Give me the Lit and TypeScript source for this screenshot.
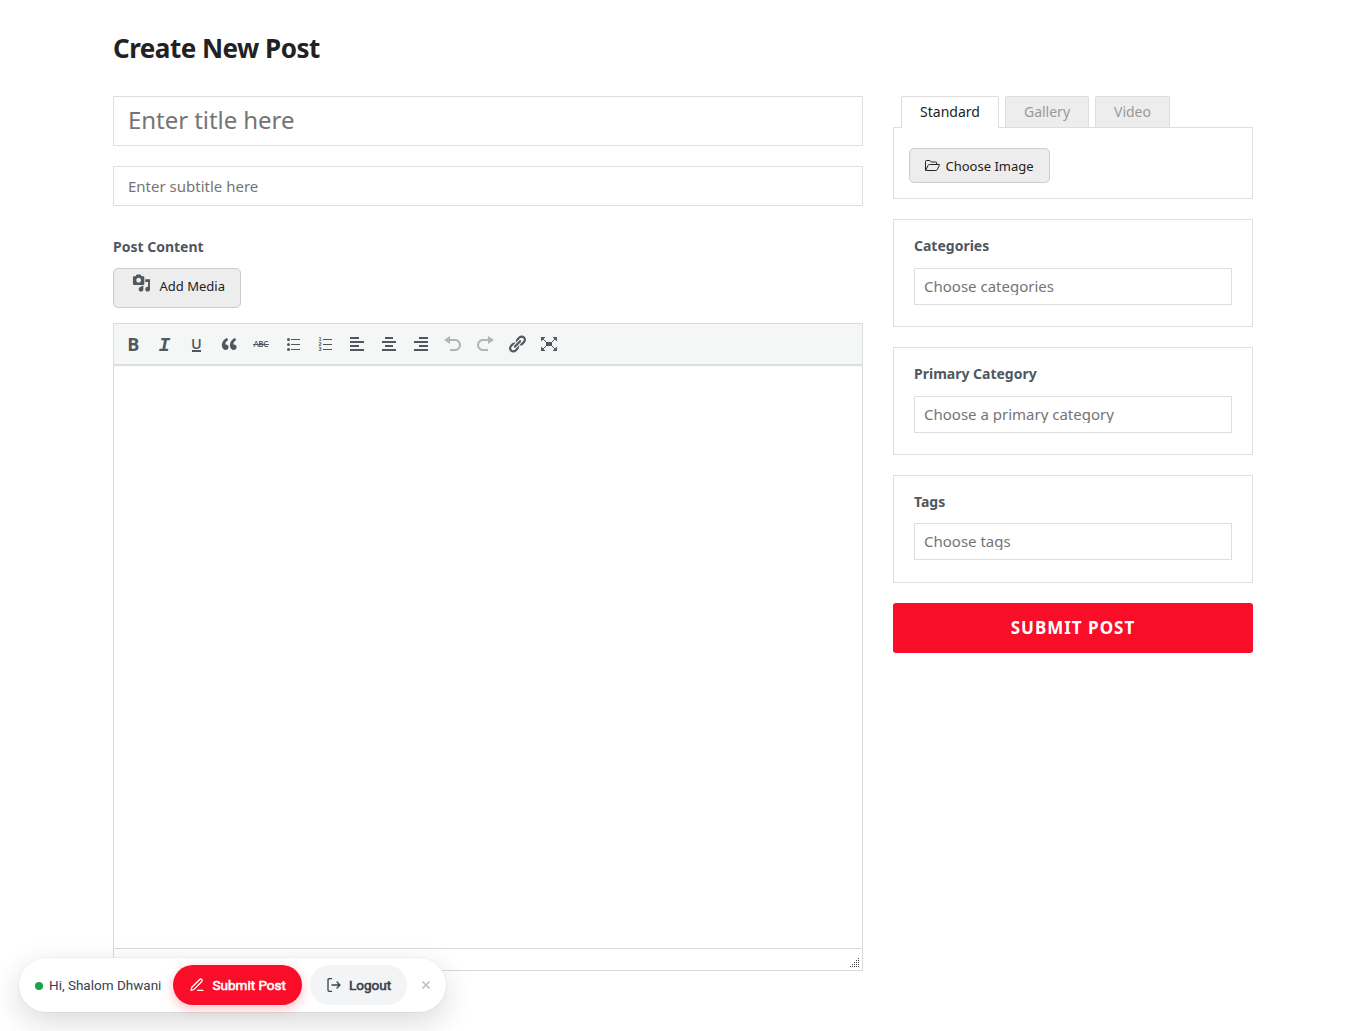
import { LitElement, html, svg, css } from "lit";
import { customElement, state } from "lit/decorators.js";

const icon = (body: unknown, cls = "icon") =>
  html`<svg class=${cls} viewBox="0 0 20 20" width="20" height="20" aria-hidden="true">${body}</svg>`;

const bars = (rows: [number, number][]) =>
  svg`${rows.map(([x, w], i) => svg`<rect x=${x} y=${3 + i * 4} width=${w} height="2" />`)}`;

const TOOLS: { name: string; off?: boolean; body: unknown }[] = [
  { name: "Bold", body: svg`<text class="t-bold" x="4.3" y="17">B</text>` },
  { name: "Italic", body: svg`<text class="t-italic" x="3.600" y="17">I</text>` },
  { name: "Underline", body: svg`<text class="t-under" x="3.9" y="15">U</text><rect x="5" y="16" width="9" height="2" />` },
  {
    name: "Blockquote",
    body: svg`<path d="M9.49 13.22c0-.74-.2-1.38-.61-1.9-.62-.78-1.83-.88-2.53-.72-.29-1.65 1.11-3.75 2.92-4.65L7.88 4c-2.73 1.3-5.42 4.28-4.96 8.05C3.21 14.43 4.59 16 6.54 16c.85 0 1.56-.25 2.12-.75s.83-1.18.83-2.03zm8.05 0c0-.74-.2-1.38-.61-1.9-.63-.78-1.83-.88-2.53-.72-.29-1.65 1.11-3.75 2.92-4.65L15.93 4c-2.73 1.3-5.41 4.28-4.95 8.05.29 2.38 1.66 3.95 3.61 3.95.85 0 1.56-.25 2.12-.75s.83-1.18.83-2.03z"/>`,
  },
  { name: "Strikethrough", body: svg`<text class="t-abc" x="2.4" y="13" textLength="15">ABC</text><rect x="2" y="10" width="16" height="1" />` },
  {
    name: "Bulleted list",
    body: svg`<circle cx="5.5" cy="5.5" r="1.5"/><circle cx="5.5" cy="10.5" r="1.5"/><circle cx="5.5" cy="15.5" r="1.5"/><path d="M8 5h9v1H8zM8 10h9v1H8zM8 15h9v1H8z"/>`,
  },
  {
    name: "Numbered list",
    body: svg`<text class="t-num" x="3.6" y="7">1</text><text class="t-num" x="3.6" y="12.200">2</text><text class="t-num" x="3.6" y="17.400">3</text><path d="M8 5h9v1H8zM8 10h9v1H8zM8 15h9v1H8z"/>`,
  },
  { name: "Align left", body: bars([[3, 9], [3, 14], [3, 9], [3, 14]]) },
  { name: "Align center", body: bars([[6, 8], [3, 14], [6, 8], [3, 14]]) },
  { name: "Align right", body: bars([[8, 9], [3, 14], [8, 9], [3, 14]]) },
  { name: "Undo", off: true, body: svg`<path d="M12 5H7V2L1 6l6 4V7h5c2.2 0 4 1.8 4 4s-1.8 4-4 4H7v2h5c3.3 0 6-2.7 6-6s-2.7-6-6-6z"/>` },
  { name: "Redo", off: true, body: svg`<path d="M8 5h5V2l6 4-6 4V7H8c-2.2 0-4 1.8-4 4s1.8 4 4 4h5v2H8c-3.3 0-6-2.7-6-6s2.7-6 6-6z"/>` },
  {
    name: "Link",
    body: svg`<path d="M17.74 2.76c1.68 1.69 1.68 4.41 0 6.1l-1.53 1.52c-1.12 1.12-2.7 1.47-4.14 1.09l2.62-2.61.76-.77.76-.76c.84-.84.84-2.2 0-3.04-.84-.85-2.2-.85-3.04 0l-.77.76-3.38 3.38c-.37-1.44-.02-3.02 1.1-4.14l1.52-1.53c1.69-1.68 4.42-1.68 6.1 0zM8.59 13.43l5.34-5.34c.42-.42.42-1.1 0-1.52-.44-.43-1.13-.39-1.53 0l-5.33 5.34c-.42.42-.42 1.1 0 1.52.44.43 1.13.39 1.52 0zm-.76 2.29l4.14-4.15c.38 1.44.03 3.02-1.09 4.14l-1.52 1.53c-1.69 1.68-4.41 1.68-6.1 0-1.68-1.68-1.68-4.42 0-6.1l1.53-1.52c1.12-1.12 2.7-1.47 4.14-1.1l-4.14 4.15c-.85.84-.85 2.2 0 3.05.84.84 2.2.84 3.04 0z"/>`,
  },
  {
    name: "Fullscreen",
    body: svg`<path d="M7 8h6v4H7z"/><path d="M2 3h4.500L2 7.500zM18 3v4.500L13.500 3zM2 17v-4.500L6.500 17zM18 17h-4.500l4.500-4.500z"/><path class="line" d="M3.500 4.500 7.200 8.100M16.500 4.500 12.800 8.100M3.500 15.500 7.200 11.900M16.500 15.500 12.800 11.900"/>`,
  },
];

const FIELDS = [
  { label: "Categories", hint: "Choose categories", cls: "card" },
  { label: "Primary Category", hint: "Choose a primary category", cls: "card" },
  { label: "Tags", hint: "Choose tags", cls: "card tight" },
];

@customElement("app-root")
export class AppRoot extends LitElement {
  @state() private tab = "Standard";

  static styles = css`
    :host {
      display: block;
      position: relative;
      height: 1031px;
      overflow: hidden;
      background: #fff;
      color: #222;
      font-family: "Noto Sans", sans-serif;
      font-size: 14px;
    }
    * { box-sizing: border-box; }
    button, input, textarea { font-family: inherit; margin: 0; }
    svg { display: block; flex: none; }
    .page { width: 1140px; margin: 0 auto; padding-top: 30px; }
    h1 {
      margin: 0 0 30px;
      font-size: 26px;
      line-height: 36px;
      font-weight: 700;
      letter-spacing: -0.5px;
      color: #222;
    }
    .columns { display: grid; grid-template-columns: 750px 360px; gap: 30px; }
    .main { display: flex; flex-direction: column; align-items: flex-start; }
    input {
      display: block;
      width: 100%;
      border: 1px solid #dedede;
      border-radius: 0;
      background: #fff;
      outline: none;
      color: #222;
    }
    input::placeholder { color: #757575; opacity: 1; }
    .title { height: 50px; padding: 0 14px 3px; font-size: 24px; letter-spacing: -0.06px; margin-bottom: 20px; }
    .subtitle { height: 40px; padding: 0 14px; font-size: 15px; margin-bottom: 31px; }
    .label { font-size: 14px; line-height: 20px; font-weight: 700; color: #50575e; }
    .media {
      display: flex;
      width: 128px;
      height: 40px;
      margin: 11px 0 15px;
      padding: 5px 0 0 18px;
      gap: 8px;
      border: 1px solid #ccc;
      border-radius: 5px;
      background: #ededed;
      font-size: 13px;
      line-height: 25px;
      color: #222;
    }
    .media svg { width: 18px; height: 18px; margin: 0 1px 0 0; fill: #50575e; }
    .media span { margin-left: 0.5px; }
    .editor {
      display: flex;
      flex-direction: column;
      width: 750px;
      height: 648px;
      border: 1px solid #dadcdc;
    }
    .tools {
      display: flex;
      gap: 12px;
      height: 40px;
      padding: 10px 9px;
      background: #f5f7f7;
      box-shadow: 0 1px 0 #dcdede, 0 2px 1px #dedede;
      position: relative;
    }
    .tool { width: 20px; height: 20px; padding: 0; border: 0; background: none; color: #50575e; }
    .tool.off { color: #b3b5b8; }
    .icon { fill: currentColor; overflow: visible; }
    .line { stroke: currentColor; stroke-width: 1; fill: none; }
    .t-bold { font: 700 18px "Open Sans", sans-serif; }
    .t-italic { font: italic 700 19.500px "Liberation Mono", monospace; }
    .t-under { font: 600 14.500px "Open Sans", sans-serif; }
    .t-abc { font: 600 8px "Open Sans", sans-serif; }
    .t-num { font: 700 5.500px "Liberation Sans", sans-serif; }
    .body { flex: 1; width: 100%; border: 0; outline: none; resize: none; background: #fff; }
    .status { display: flex; justify-content: flex-end; align-items: flex-end; height: 22px; border-top: 1px solid #dadcdc; padding: 0 3px 3px; }
    .grip { fill: #444; }

    .tabs { display: flex; gap: 6px; padding-left: 8px; height: 31px; }
    .tab {
      height: 31px;
      padding: 0;
      border: 1px solid #dedede;
      border-bottom: 0;
      border-radius: 2px 2px 0 0;
      background: #ededed;
      color: #999;
      font-size: 14px;
      line-height: 30px;
    }
    .tab.on { height: 32px; padding-bottom: 1px; background: #fff; color: #222; position: relative; }
    .w98 { width: 98px; }
    .w84 { width: 84px; }
    .w75 { width: 75px; }
    .panel { height: 72px; padding: 20px 15px; border: 1px solid #dedede; }
    .choose {
      display: flex;
      align-items: center;
      width: 141px;
      height: 35px;
      padding: 1px 0 0 15px;
      gap: 5px;
      border: 1px solid #ccc;
      border-radius: 5px;
      background: #ededed;
      color: #222;
      font-size: 13px;
    }
    .choose span { margin-left: -0.5px; }
    .folder { fill: none; stroke: #222; stroke-width: 1; stroke-linejoin: round; }
    .card { height: 108px; margin-top: 20px; padding: 16px 20px; border: 1px solid #dedede; }
    .card .label { margin-bottom: 12px; }
    .card.tight .label { margin-bottom: 11px; }
    .hint { height: 37px; padding: 9px; border: 1px solid #dedede; }
    .hint span { display: block; height: 17px; line-height: 17px; overflow: hidden; color: #757575; font-size: 15px; }
    .submit {
      display: block;
      width: 100%;
      height: 50px;
      margin-top: 20px;
      padding: 0 0 2px;
      border: 0;
      border-radius: 3px;
      background: #fa0d28;
      color: #fff;
      font-size: 17px;
      font-weight: 700;
      letter-spacing: 1px;
    }

    .float {
      position: absolute;
      left: 19px;
      top: 958px;
      display: flex;
      align-items: center;
      width: 427px;
      height: 54px;
      padding-left: 16px;
      border-radius: 27px;
      background: #fff;
      box-shadow: 0 0 0 1px rgba(0, 0, 0, 0.03), 0 10px 30px rgba(17, 24, 39, 0.16);
      font-family: Roboto, sans-serif;
      font-size: 13.5px;
      color: #374151;
    }
    .dot { width: 8px; height: 8px; margin-top: 1px; border-radius: 50%; background: #16a34a; margin-right: 6px; }
    .hello { width: 124px; white-space: nowrap; }
    .pill {
      display: flex;
      align-items: center;
      gap: 7px;
      height: 40px;
      padding: 0 0 0 16px;
      border: 0;
      border-radius: 20px;
      font-size: 13.5px;
      font-weight: 400;
      white-space: nowrap;
      -webkit-text-stroke: 0.6px currentColor;
    }
    .pill.red { gap: 7.5px; width: 129px; background: #fa0d28; color: #fff; box-shadow: 0 4px 12px rgba(250, 13, 40, 0.25); }
    .pill.grey { width: 97px; margin-left: 8px; background: #f3f4f6; color: #374151; }
    .stroke { fill: none; stroke: currentColor; stroke-width: 1.3; stroke-linecap: round; stroke-linejoin: round; }
    .close { width: 20px; margin-left: 9px; padding: 0; border: 0; background: none; color: #b9bec7; }
    .close svg { margin: 0 auto; stroke-width: 1.600; stroke-linecap: butt; }
  `;

  render() {
    return html`
      <div class="page">
        <h1>Create New Post</h1>
        <div class="columns">
          <div class="main">
            <input class="title" placeholder="Enter title here" />
            <input class="subtitle" placeholder="Enter subtitle here" />
            <div class="label">Post Content</div>
            <button class="media">
              <svg viewBox="0 0.500 19 19"><path d="M13 11V4c0-.55-.45-1-1-1h-1.670L9 1H5L3.670 3H2c-.55 0-1 .45-1 1v7c0 .55.45 1 1 1h10c.55 0 1-.45 1-1zM7 4.500c1.380 0 2.500 1.120 2.500 2.500S8.380 9.500 7 9.500 4.500 8.380 4.500 7 5.620 4.500 7 4.500zM14 6h5v10.500c0 1.380-1.120 2.500-2.500 2.500S14 17.880 14 16.500s1.120-2.500 2.500-2.500c.17 0 .34.02.5.05V9h-3V6zm-4 8.050V13h2v3.500c0 1.380-1.120 2.500-2.500 2.500S7 17.880 7 16.500 8.120 14 9.500 14c.17 0 .34.02.5.05z"/></svg>
              <span>Add Media</span>
            </button>
            <div class="editor">
              <div class="tools">
                ${TOOLS.map((t) => html`<button class=${t.off ? "tool off" : "tool"} aria-label=${t.name}>${icon(t.body)}</button>`)}
              </div>
              <textarea class="body"></textarea>
              <div class="status">
                <svg class="grip" width="9" height="9" viewBox="0 0 9 9">
                  ${[0, 1, 2, 3, 4].map((r) =>
                    Array.from({ length: r + 1 }, (_, i) => svg`<rect x=${8 - i * 2} y=${r * 2} width="1" height="1" />`)
                  )}
                </svg>
              </div>
            </div>
          </div>
          <div class="side">
            <div class="tabs">
              ${[["Standard", "w98"], ["Gallery", "w84"], ["Video", "w75"]].map(
                ([name, w]) => html`<button class="tab ${w} ${this.tab === name ? "on" : ""}" @click=${() => (this.tab = name)}>${name}</button>`
              )}
            </div>
            <div class="panel">
              <button class="choose">
                <svg class="folder" width="16" height="14" viewBox="0 0 16 14"><path d="M.5 11V2.500q0-1 1-1H4.800l1.500 1.500H10.700q1 0 1 1V5.500M.6 11.500 3.200 6.200Q3.600 5.500 4.500 5.500H14q.8 0 .4.700L12.200 10.800Q11.700 11.500 10.800 11.500H1.300Q.5 11.500.5 11"/></svg>
                <span>Choose Image</span>
              </button>
            </div>
            ${FIELDS.map(
              (f) => html`<div class=${f.cls}>
                <div class="label">${f.label}</div>
                <div class="hint"><span>${f.hint}</span></div>
              </div>`
            )}
            <button class="submit">SUBMIT POST</button>
          </div>
        </div>
      </div>
      <div class="float">
        <span class="dot"></span>
        <span class="hello">Hi, Shalom Dhwani</span>
        <button class="pill red">
          <svg class="stroke" width="16" height="16" viewBox="0 0 16 16"><path d="M8.500 13.300H14M10.700 2.500a1.400 1.400 0 0 1 2.100 2L5 12.400 2 13.300l.8-3z"/></svg>
          <span>Submit Post</span>
        </button>
        <button class="pill grey">
          <svg class="stroke" width="16" height="16" viewBox="0 0 16 16"><path d="M5.500 1.700H3.300Q2 1.700 2 3v10q0 1.300 1.300 1.300H5.500M6 8h8M11 5l3 3-3 3"/></svg>
          <span>Logout</span>
        </button>
        <button class="close" aria-label="Close">
          <svg class="stroke" width="10" height="10" viewBox="0 0 10 10"><path d="M1.500 1.500l7 7M8.500 1.500l-7 7"/></svg>
        </button>
      </div>
    `;
  }
}
